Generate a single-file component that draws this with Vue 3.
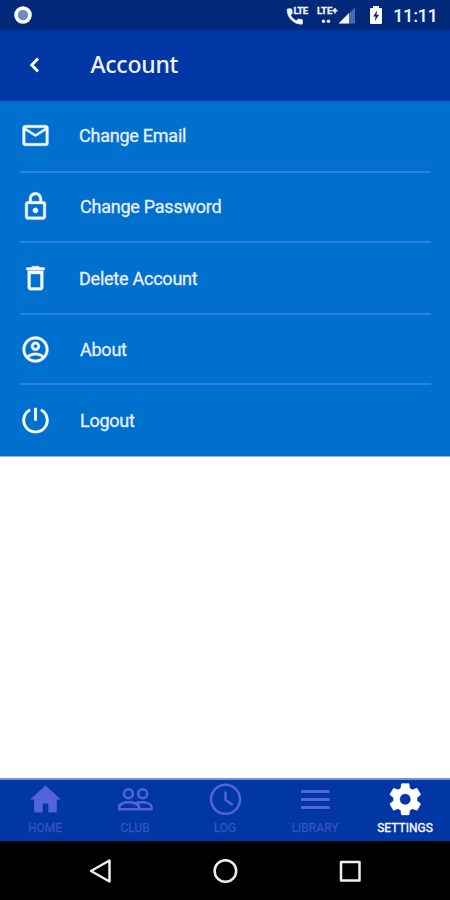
<script setup>
const rows = [
  { label: 'Change Email', key: 'email', d: 'M22 6c0-1.1-.9-2-2-2H4c-1.1 0-2 .9-2 2v12c0 1.1.9 2 2 2h16c1.1 0 2-.9 2-2V6zm-2 0l-8 5-8-5h16zm0 12H4V8l8 5 8-5v10z' },
  { label: 'Change Password', key: 'password', d: 'M18 8h-1V6c0-2.760-2.240-5-5-5S7 3.240 7 6v2H6c-1.100 0-2 .900-2 2v10c0 1.100.900 2 2 2h12c1.100 0 2-.900 2-2V10c0-1.100-.900-2-2-2zM9 6c0-1.660 1.340-3 3-3s3 1.340 3 3v2H9V6zm9 14H6V10h12v10zm-6-3c1.100 0 2-.900 2-2s-.900-2-2-2-2 .900-2 2 .900 2 2 2z' },
  { label: 'Delete Account', key: 'delete', d: 'M6 19c0 1.100.900 2 2 2h8c1.100 0 2-.900 2-2V6H6v13zM8.200 8.500h7.600v10.500H8.200V8.500zm7.300-5l-1-1h-5l-1 1H5v2h14V3.500h-3.500z' },
  { label: 'About', key: 'about', d: 'M12 2C6.480 2 2 6.480 2 12s4.480 10 10 10 10-4.480 10-10S17.520 2 12 2zM7.070 18.280c.430-.900 3.050-1.780 4.930-1.780s4.510.880 4.930 1.780C15.570 19.360 13.860 20 12 20s-3.570-.640-4.930-1.720zm11.290-1.450c-1.430-1.740-4.900-2.330-6.360-2.330s-4.930.590-6.360 2.330C4.620 15.490 4 13.820 4 12c0-4.410 3.590-8 8-8s8 3.590 8 8c0 1.820-.620 3.490-1.640 4.830zM12 6c-1.940 0-3.500 1.560-3.500 3.500S10.060 13 12 13s3.500-1.560 3.500-3.500S13.940 6 12 6zm0 5c-.830 0-1.500-.670-1.500-1.500S11.170 8 12 8s1.500.670 1.500 1.500S12.830 11 12 11z' },
  { label: 'Logout', key: 'logout' },
]
const tabs = ['HOME', 'CLUB', 'LOG', 'LIBRARY', 'SETTINGS']
</script>

<template>
  <div class="screen">
    <div class="status">
      <svg class="record" viewBox="0 0 18 18"><circle cx="9" cy="9" r="8.800" fill="#fff" /><circle cx="9" cy="9" r="5.200" fill="#6e8cc4" /></svg>
      <svg class="indicators" viewBox="286 0 72 30" fill="#f3f5fd">
        <path transform="translate(284.500 6.200) scale(.860)" stroke="#f3f5fd" stroke-width=".7" d="M20.010 15.380c-1.230 0-2.420-.200-3.530-.560-.350-.120-.740-.030-1.010.240l-1.570 1.970c-2.830-1.350-5.480-3.900-6.890-6.830l1.950-1.660c.270-.280.350-.670.240-1.020-.370-1.110-.560-2.300-.560-3.530 0-.540-.450-.990-.990-.990H4.190C3.650 3 3 3.240 3 3.990 3 13.280 10.730 21 20.010 21c.710 0 .990-.630.990-1.180v-3.450c0-.540-.450-.990-.990-.990z" />
        <text x="293.500" y="14.300" textLength="14.500">LTE</text>
        <text x="317" y="14.300" textLength="20.500">LTE+</text>
        <circle cx="323.500" cy="21.300" r="1.700" /><circle cx="328.500" cy="21.300" r="1.700" />
        <path d="M339 23.500L355 7.500V23.500z" fill="#4a69b3" /><path d="M338.500 23.500L349 13V23.500z" />
      </svg>
      <svg class="battery" viewBox="0 0 12 18"><path d="M3 2V0h6v2h2q1 0 1 1v14q0 1-1 1H1q-1 0-1-1V3q0-1 1-1z" fill="#fff" /><path d="M7 4.500L3.200 10.500H5.600L5 15L9 8.700H6.500z" fill="#00246f" /></svg>
      <span class="time">11:11</span>
    </div>

    <header class="bar">
      <svg class="back" viewBox="0 0 12 16"><path d="M9 1.500L2.800 8L9 14.500" fill="none" stroke="#fff" stroke-width="2.900" /></svg>
      <h1>Account</h1>
    </header>

    <main class="body">
      <ul class="list">
        <li v-for="row in rows" :key="row.key" class="row" :class="row.key">
          <svg class="icon" viewBox="0 0 24 24">
            <path v-if="row.d" :d="row.d" fill="#f4f7ff" stroke="#f4f7ff" stroke-width=".3" />
            <path v-else d="M7.900 3.700A9.100 9.100 0 1 0 16.100 3.700M12 2.200V12.200" fill="none" stroke="#f4f7ff" stroke-width="2.300" />
          </svg>
          <span class="label">{{ row.label }}</span>
        </li>
      </ul>
    </main>

    <nav class="tabs">
      <div v-for="tab in tabs" :key="tab" class="tab" :class="{ active: tab === 'SETTINGS' }">
        <svg viewBox="0 0 36 36" fill="currentColor">
          <path v-if="tab === 'HOME'" d="M15.700 31.500v-9h5.600v9h8.500V18.500H34L18.600 4.500L3.200 18.500H7.200v13z" />
          <g v-else-if="tab === 'CLUB'" fill="none" stroke="currentColor" stroke-width="2.500">
            <circle cx="11.400" cy="12.800" r="4.500" /><circle cx="25.700" cy="12.800" r="4.500" />
            <path d="M2.200 28.300V26.200C2.200 23 7 21.200 11.500 21.200C16.500 21.200 22 23 22 26.200V28.300zM18 22.300C20 21.500 22.500 21.200 25 21.200C30 21.200 34.500 23 34.500 26.200V28.300H22" />
          </g>
          <g v-else-if="tab === 'LOG'" fill="none" stroke="currentColor" stroke-width="2.500">
            <circle cx="18.500" cy="18.300" r="14.500" /><path d="M18.500 10.500V18.800L25.500 24" />
          </g>
          <path v-else-if="tab === 'LIBRARY'" d="M4 9h28.500v3H4zM4 17h28.500v3H4zM4 25h28.500v3H4z" />
          <path v-else transform="translate(-.700 -.700) scale(1.580)" stroke="#fff" stroke-width=".2" d="M19.430 12.980c.040-.320.070-.640.070-.980s-.030-.660-.070-.980l2.110-1.650c.190-.150.240-.420.120-.640l-2-3.460c-.120-.220-.390-.300-.610-.220l-2.490 1c-.520-.400-1.080-.730-1.690-.980l-.380-2.650C14.460 2.180 14.250 2 14 2h-4c-.250 0-.460.180-.490.420l-.380 2.650c-.610.250-1.170.590-1.690.980l-2.490-1c-.230-.090-.490 0-.610.220l-2 3.460c-.130.220-.070.490.120.640l2.110 1.650c-.040.320-.070.650-.070.980s.030.660.070.980l-2.110 1.650c-.190.150-.240.420-.120.640l2 3.460c.120.220.390.300.610.220l2.490-1c.520.400 1.080.730 1.690.980l.380 2.650c.030.240.240.420.490.420h4c.250 0 .460-.180.490-.420l.380-2.650c.610-.250 1.170-.590 1.690-.980l2.490 1c.230.090.490 0 .610-.220l2-3.460c.120-.220.070-.490-.120-.640l-2.110-1.650zM12 15.500c-1.930 0-3.500-1.570-3.500-3.500s1.570-3.500 3.500-3.500 3.500 1.570 3.500 3.500-1.570 3.500-3.500 3.500z" />
        </svg>
        <span>{{ tab }}</span>
      </div>
    </nav>

    <div class="system">
      <svg viewBox="0 0 26 26"><path d="M22.500 2.500V23.500L4 13z" /></svg>
      <svg viewBox="0 0 26 26"><circle cx="13.400" cy="13" r="10.800" /></svg>
      <svg viewBox="0 0 26 26"><path d="M4 3.900H22.500V22.400H4z" /></svg>
    </div>
  </div>
</template>

<style>
body { margin: 0; }
</style>

<style scoped>
.screen { width: 450px; height: 900px; display: flex; flex-direction: column; background: #fff; font-family: Roboto, sans-serif; overflow: hidden; }
svg { display: block; flex: none; }
.status { height: 30px; flex: none; background: #002979; display: flex; align-items: center; box-sizing: border-box; padding-left: 14px; }
.record { width: 18px; height: 18px; }
.indicators { width: 72px; height: 30px; margin-left: 254px; }
.indicators text { font: 700 9.500px Roboto, sans-serif; stroke: #f3f5fd; stroke-width: .3px; }
.battery { width: 12px; height: 18px; margin-left: 12px; }
.time { font-size: 18.500px; font-weight: 500; color: #eef2ff; margin-left: 11px; line-height: 30px; padding-top: 2px; letter-spacing: -.45px; }
.bar { height: 71px; flex: none; background: #0037a4; display: flex; align-items: center; box-sizing: border-box; padding: 0 0 1px 29px; }
.back { width: 12px; height: 16px; }
h1 { margin: 0 0 0 49.500px; padding-bottom: 2px; font: 500 23px/68px "Noto Sans", sans-serif; letter-spacing: -.25px; color: #f1f2ff; }
.body { flex: 1; }
.list { margin: 0; list-style: none; height: 356px; display: grid; grid-template-rows: 72px 70px 72px 70px 71px; background: linear-gradient(#0068c5, #0070cf 4px); border-bottom: 1px solid #8fb9e8; box-sizing: border-box; padding: 0 19px 0 20px; }
.row { display: flex; align-items: center; border-bottom: 2px solid #2b82d9; }
.email { padding-bottom: 1px; }
.password { padding-bottom: 1px; }
.row:last-child { border-bottom: 0; }
.icon { width: 31px; height: 31px; }
.label { margin-left: 29px; font-size: 18px; color: #e9efff; letter-spacing: -.24px; -webkit-text-stroke: .3px #e9efff; }
.email .label, .delete .label { margin-left: 28px; }
.tabs { height: 63px; flex: none; box-sizing: border-box; border-top: 2px solid #7794d0; background: #0037a4; display: grid; grid-template-columns: repeat(5, 1fr); }
.tab { display: flex; flex-direction: column; align-items: center; color: #5264dc; }
.tab svg { width: 36px; height: 36px; margin-top: 1px; }
.tab span { font-size: 12px; line-height: 14px; margin-top: 4px; color: #3552c5; -webkit-text-stroke: .3px currentColor; }
.tab.active, .tab.active span { color: #fff; }
.system { height: 59px; flex: none; background: #000; display: flex; align-items: center; justify-content: center; gap: 99px; }
.system svg { width: 26px; height: 26px; fill: none; stroke: #eee; stroke-width: 2.500; stroke-linejoin: round; }
</style>
